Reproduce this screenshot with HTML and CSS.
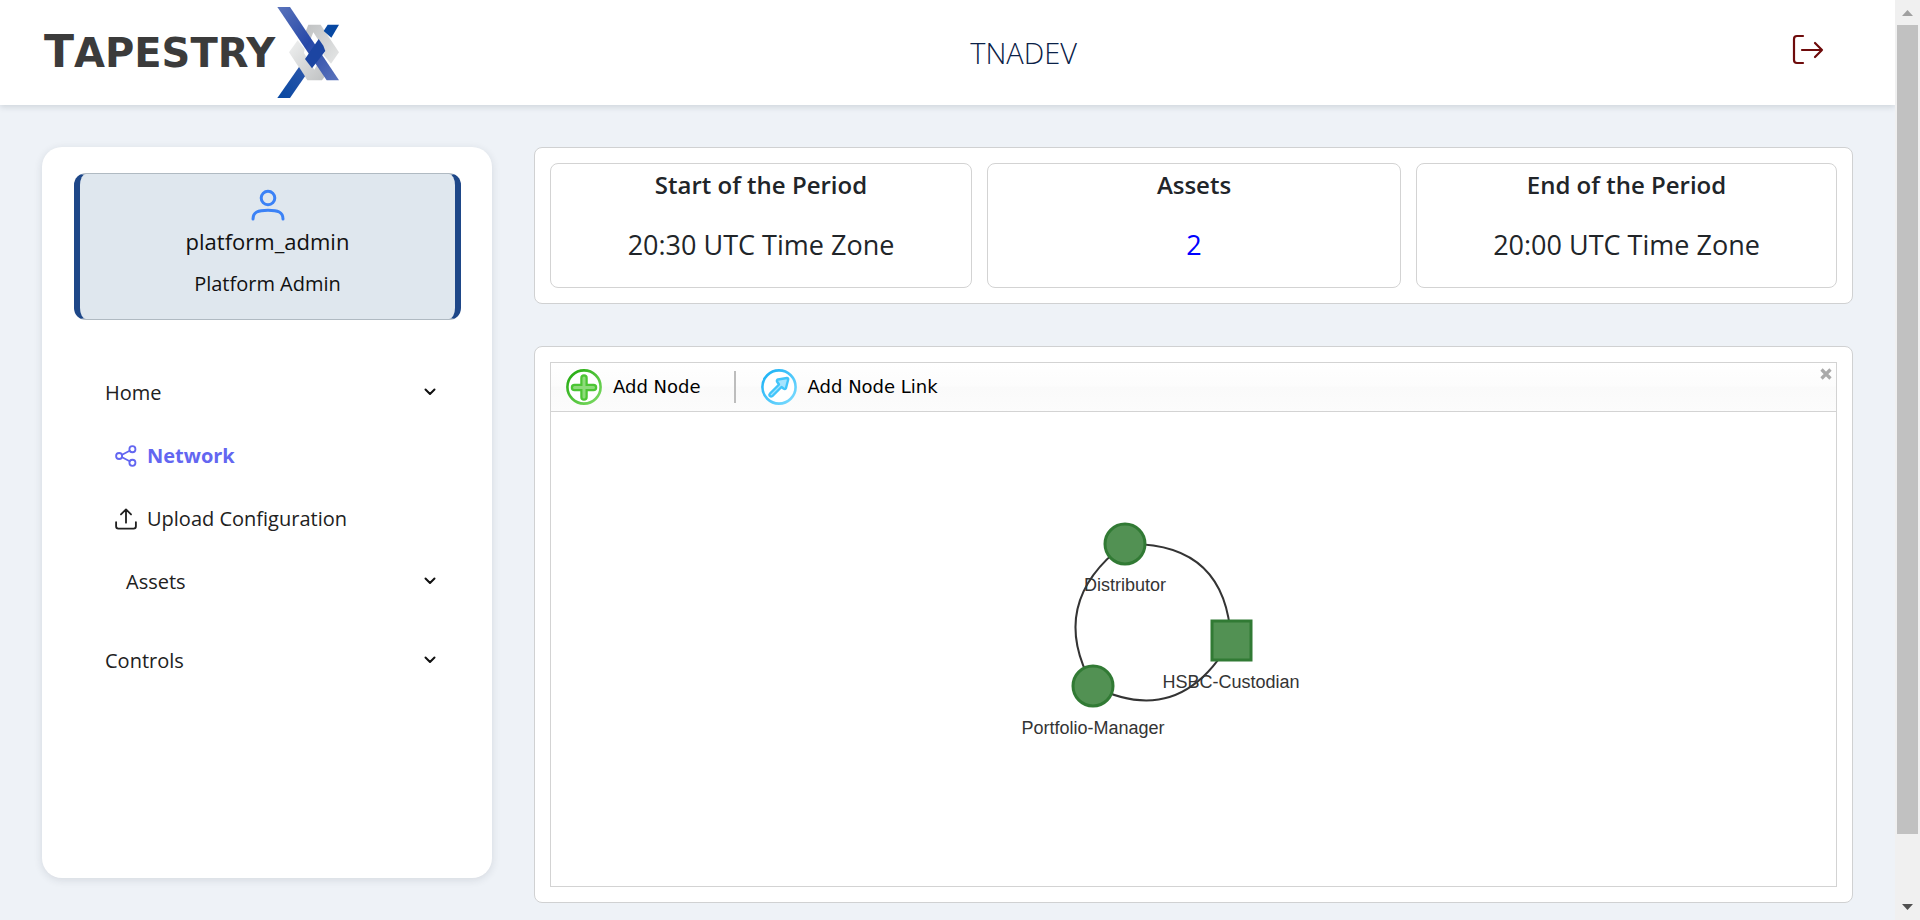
FILE: index.html
```html
<!DOCTYPE html>
<html lang="en">
<head>
<meta charset="utf-8">
<title>TapestryX - Network</title>
<link rel="stylesheet" href="styles.css">
</head>
<body>
<div class="page">
  <header class="topbar">
    <a class="logo" href="#" aria-label="TapestryX home">
      <span class="logo-text"><span class="logo-cap">T</span>APESTRY</span>
      <svg class="logo-mark" viewBox="735 16 198 285" aria-hidden="true">
        <defs>
          <linearGradient id="bar" x1="0" y1="0" x2="1" y2="1"><stop offset="0" stop-color="#5a73bb"/><stop offset=".5" stop-color="#2748a8"/><stop offset="1" stop-color="#5c74bc"/></linearGradient>
          <linearGradient id="tail" x1="1" y1="0" x2="0" y2="1"><stop offset="0" stop-color="#2b56aa"/><stop offset="1" stop-color="#0748a2"/></linearGradient>
          <linearGradient id="silver" x1="0" y1="0" x2="1" y2="1"><stop offset="0" stop-color="#f0f1f1"/><stop offset="1" stop-color="#bfc1c2"/></linearGradient>
          <linearGradient id="silver2" x1="0" y1="0" x2="1" y2="1"><stop offset="0" stop-color="#bfc1c2"/><stop offset="1" stop-color="#e6e7e7"/></linearGradient>
        </defs>
        <path fill="url(#silver)" d="M803 122 777 158 832 242H876L886 228 863 193 853 210 822 160 824 148Z"/>
        <path fill="url(#silver2)" d="M835 75H872L927 158 903 192 880 165 886 154 850 98 842 118 826 98Z"/>
        <path fill="url(#bar)" d="M742 22H780L927 242H890Z"/>
        <path fill="#1c45a2" d="M825 178 866 118 880 138 886 154 846 206Z"/>
        <path fill="url(#tail)" d="M742 295 807 202 825 230 780 295Z"/>
        <path fill="#0748a2" d="M893 75H927L904 114 881 94Z"/>
      </svg>
    </a>
    <h1 class="site-name">TNADEV</h1>
    <button class="icon-button logout" type="button" aria-label="Sign out">
      <svg viewBox="0 0 32 32" width="32" height="32" fill="none" stroke="currentColor" stroke-width="2.200" stroke-linecap="round" stroke-linejoin="round"><path d="M11 2H5Q2 2 2 5V26Q2 29 5 29H11M10 16H30M23 9 30 16 23 23"/></svg>
    </button>
  </header>

  <div class="layout">
    <aside class="sidebar">
      <section class="profile">
        <svg viewBox="0 0 34 32" width="34" height="32" fill="none" stroke="currentColor" stroke-width="3" stroke-linecap="round"><circle cx="17" cy="9" r="6.800"/><path d="M2 30C2 23 7 21.300 17 21.300S32 23 32 30"/></svg>
        <p class="profile-name">platform_admin</p>
        <p class="profile-role">Platform Admin</p>
      </section>
      <nav class="menu">
        <button class="menu-row" type="button">Home <svg class="chevron" viewBox="0 0 12 10"><path d="M1.500 1.500 6 6 10.500 1.500"/></svg></button>
        <a class="menu-row menu-child active" href="#">
          <svg class="menu-icon" viewBox="0 0 24 24"><circle cx="4.500" cy="12" r="3.300"/><circle cx="19" cy="4.600" r="3.300"/><circle cx="19" cy="19.400" r="3.300"/><path d="M7.700 10.600 16 6.300M7.700 13.400 16 17.700"/></svg>
          Network
        </a>
        <a class="menu-row menu-child" href="#">
          <svg class="menu-icon" viewBox="0 0 24 24"><path d="M1.200 15.500V20Q1.200 22.500 3.700 22.500H20.300Q22.800 22.500 22.800 20V15.500M12 16V1.500M6.500 7 12 1.500 17.500 7"/></svg>
          Upload Configuration
        </a>
        <button class="menu-row menu-sub" type="button">Assets <svg class="chevron" viewBox="0 0 12 10"><path d="M1.500 1.500 6 6 10.500 1.500"/></svg></button>
        <button class="menu-row menu-group" type="button">Controls <svg class="chevron" viewBox="0 0 12 10"><path d="M1.500 1.500 6 6 10.500 1.500"/></svg></button>
      </nav>
    </aside>

    <main class="content">
      <section class="panel stats">
        <article class="stat"><h2>Start of the Period</h2><p>20:30 UTC Time Zone</p></article>
        <article class="stat"><h2>Assets</h2><p><a href="#">2</a></p></article>
        <article class="stat"><h2>End of the Period</h2><p>20:00 UTC Time Zone</p></article>
      </section>
      <section class="panel">
        <div class="network">
          <div class="toolbar">
            <button class="tool" type="button">
              <svg viewBox="0 0 36 36" width="36" height="36" fill="none"><defs><linearGradient id="green" x1="0" y1="0" x2="1" y2="1"><stop offset="0" stop-color="#1fa80c"/><stop offset="1" stop-color="#7fdc66"/></linearGradient></defs><circle cx="18" cy="18" r="16.600" fill="#fff" stroke="url(#green)" stroke-width="2.600"/><path d="M18 9V28M8.500 18.500H27.500" stroke="#4cc534" stroke-width="7.500" stroke-linecap="round"/><path d="M18 9V28M8.500 18.500H27.500" stroke="#8edb7b" stroke-width="3" stroke-linecap="round"/></svg>
              Add Node
            </button>
            <span class="divider"></span>
            <button class="tool" type="button">
              <svg viewBox="0 0 36 36" width="36" height="36" fill="none"><defs><linearGradient id="sky" x1="0" y1="0" x2="1" y2="1"><stop offset="0" stop-color="#16b0f5"/><stop offset="1" stop-color="#7fdcff"/></linearGradient></defs><circle cx="18" cy="18" r="16.600" fill="#fff" stroke="url(#sky)" stroke-width="2.600"/><path d="M9 24.500 18 15.500 16 12.500Q15.500 11 17 10.500L26 9Q27.500 9 27.200 10.500L25 19Q24 20.500 22.500 19.500L20.500 18 11.500 27Q9.500 28 8.500 26.500 8 25.500 9 24.500Z" fill="#a5e4ff" stroke="#42c5fa" stroke-width="2.400" stroke-linejoin="round"/></svg>
              Add Node Link
            </button>
            <button class="icon-button close" type="button" aria-label="Close">
              <svg viewBox="0 0 12 12" width="12" height="12" stroke="currentColor" stroke-width="3.200"><path d="M1.500 1.500 10.500 10.500M10.500 1.500 1.500 10.500"/></svg>
            </button>
          </div>
          <svg class="graph" viewBox="551 412 1285 474" role="img" aria-label="Network graph">
            <g class="edges">
              <path d="M1125 544Q1226 541 1231 640"/>
              <path d="M1125 544Q1046 603 1093 686"/>
              <path d="M1093 686Q1180 730 1231 640"/>
            </g>
            <g class="nodes">
              <circle cx="1125" cy="544" r="20"/>
              <circle cx="1093" cy="686" r="20"/>
              <rect x="1212" y="621" width="39" height="39"/>
            </g>
            <g class="labels">
              <text x="1125" y="591">Distributor</text>
              <text x="1231" y="688">HSBC-Custodian</text>
              <text x="1093" y="734">Portfolio-Manager</text>
            </g>
          </svg>
        </div>
      </section>
    </main>
  </div>
</div>
<div class="scrollbar" aria-hidden="true">
  <svg viewBox="0 0 25 25"><path fill="#a0a0a0" d="M7 16H18L12.500 10Z"/></svg>
  <div class="track"><div class="thumb"></div></div>
  <svg viewBox="0 0 25 25"><path fill="#505050" d="M7 9H18L12.500 15Z"/></svg>
</div>
</body>
</html>
```
FILE: styles.css
```css
* { box-sizing: border-box; }
body {
  margin: 0;
  display: flex;
  align-items: flex-start;
  min-height: 100vh;
  background: #eef2f7;
  color: #212529;
  font-family: "Open Sans", "Noto Sans", sans-serif;
}
h1, h2, p { margin: 0; }
a { color: inherit; text-decoration: none; }
button { border: 0; padding: 0; background: none; color: inherit; font: inherit; cursor: pointer; }
svg { display: block; flex: none; }

.page { flex: 1; min-width: 0; }

.topbar {
  display: flex;
  align-items: center;
  height: 105px;
  padding: 0 71px 0 44px;
  background: #fff;
  box-shadow: 0 2px 6px rgba(30, 45, 60, .15);
}
.logo { display: flex; align-items: center; }
.logo-text { font: bold 40px/48px "DejaVu Sans", sans-serif; color: #3b3b3b; }
.logo-cap { font-size: 44px; }
.logo-mark { width: 66px; height: 95px; }
.site-name {
  flex: 1;
  padding-right: 86px;
  text-align: center;
  font-size: 29px;
  font-weight: 300;
  color: #0a2147;
}
.icon-button { display: block; }
.logout { padding-bottom: 6px; color: #6e0b0b; }

.layout {
  display: flex;
  align-items: flex-start;
  gap: 42px;
  padding: 42px 42px 16px;
}
.sidebar {
  flex: 0 0 450px;
  min-height: 731px;
  padding: 26px 31px 26px 32px;
  border-radius: 20px;
  background: #fff;
  box-shadow: 0 2px 8px rgba(30, 45, 60, .12);
}
.profile {
  display: flex;
  flex-direction: column;
  align-items: center;
  height: 147px;
  padding-top: 15px;
  border: solid #1e4788;
  border-color: #b0bac2 #1e4788;
  border-width: 1px 6px;
  border-radius: 12px;
  background: #dfe7ee;
  color: #111;
}
.profile svg { color: #3b82f6; }
.profile-name { font-size: 22px; line-height: 40px; }
.profile-role { font-size: 20px; line-height: 46px; }

.menu { padding: 41px 25px 0 31px; }
.menu-row {
  display: flex;
  align-items: center;
  width: 100%;
  height: 63px;
  font-size: 20px;
  color: #212121;
}
.chevron {
  width: 12px;
  height: 10px;
  margin-left: auto;
  fill: none;
  stroke: #111;
  stroke-width: 2;
  stroke-linecap: round;
  stroke-linejoin: round;
}
.menu-child { gap: 10px; padding-left: 10px; }
.menu-sub { padding-left: 21px; }
.menu-group { margin-top: 16px; }
.menu-icon {
  width: 22px;
  height: 22px;
  fill: none;
  stroke: currentColor;
  stroke-width: 2;
  stroke-linecap: round;
  stroke-linejoin: round;
}
.active { color: #6366f1; font-weight: 700; }

.content { flex: 1; min-width: 0; display: grid; gap: 42px; }
.panel {
  padding: 15px;
  border: 1px solid #d0d1d2;
  border-radius: 8px;
  background: #fff;
}
.stats { display: grid; grid-template-columns: 422fr 414fr 421fr; gap: 15px; }
.stat {
  height: 125px;
  padding-top: 5px;
  border: 1px solid #d3d3d3;
  border-radius: 8px;
  text-align: center;
}
.stat h2 { font-size: 24px; line-height: 32px; font-weight: 600; }
.stat p { margin-top: 24px; font-size: 27px; line-height: 40px; }
.stat a { color: #00f; }

.network { border: 1px solid #d3d3d3; }
.toolbar {
  display: flex;
  align-items: center;
  height: 49px;
  padding: 0 4px 0 15px;
  border-bottom: 1px solid #d3d3d3;
  background: linear-gradient(#fff, #fcfcfc 48%, #fafafa 50%, #fcfcfc);
  font: 18px/24px "DejaVu Sans", sans-serif;
  color: #000;
}
.tool { display: flex; align-items: center; gap: 11px; }
.divider { width: 2px; height: 32px; margin: 0 25px 0 33px; background: #bdbdbd; }
.close { align-self: flex-start; margin: 5px 0 0 auto; color: #aaa; }
.graph { width: 100%; height: 474px; }
.edges { fill: none; stroke: #343434; stroke-width: 2; }
.nodes { fill: #529153; stroke: #317a34; stroke-width: 3; }
.labels { font: 18px "Liberation Sans", Arial, sans-serif; fill: #343434; text-anchor: middle; }

.scrollbar {
  position: sticky;
  top: 0;
  flex: 0 0 25px;
  display: flex;
  flex-direction: column;
  height: 100vh;
  background: #f0f0f0;
}
.track { flex: 1; padding: 0 2px; }
.thumb { height: 93%; background: #c1c1c1; }
```
